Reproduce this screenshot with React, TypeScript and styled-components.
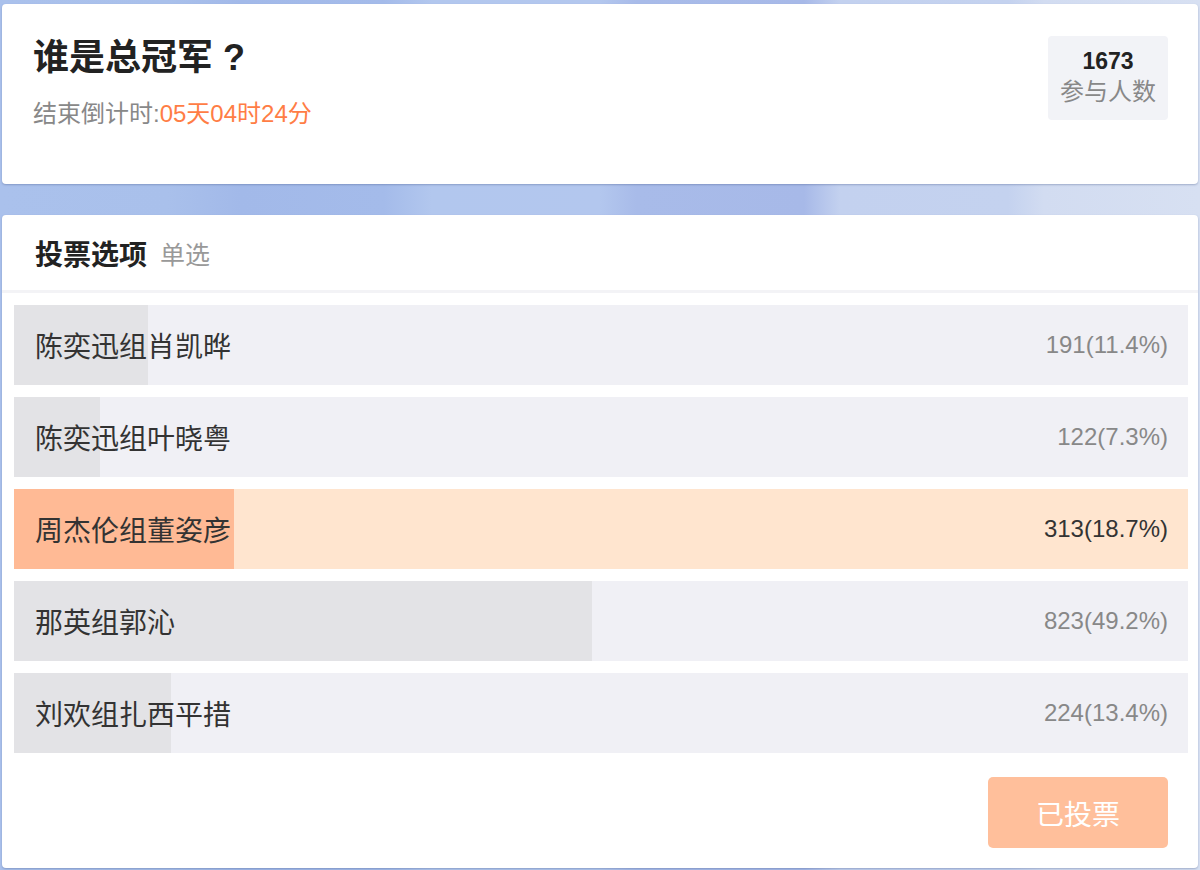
import React from "react";
import styled, { createGlobalStyle } from "styled-components";

const GlobalStyle = createGlobalStyle`
  html, body {
    margin: 0;
    padding: 0;
  }
  body {
    font-family: "Liberation Sans", "Noto Sans CJK SC", sans-serif;
    background: linear-gradient(
      90deg,
      #aac1ec 0%,
      #a9c0eb 14%,
      #a2b9e9 20%,
      #a4bbea 32%,
      #b2c7ee 36%,
      #b3c7ee 50%,
      #a8bbe9 53%,
      #a7b9e8 67%,
      #c3d1ef 70%,
      #c4d2ef 84%,
      #d2dcf1 87%,
      #d7e0f2 100%
    );
  }
`;

const Page = styled.div`
  width: 1200px;
  height: 870px;
  box-sizing: border-box;
  padding: 4px 2px 2px;
  display: flex;
  flex-direction: column;
  gap: 31px;
`;

const Card = styled.div`
  background: #fff;
  border-radius: 4px;
  box-shadow: 0 1px 2px rgba(60, 80, 130, 0.35);
  box-sizing: border-box;
`;

const InfoCard = styled(Card)`
  height: 180px;
  padding: 32px 30px 0 31px;
  display: flex;
  justify-content: space-between;
  align-items: flex-start;
`;

const TitleBlock = styled.div`
  display: flex;
  flex-direction: column;
`;

const Title = styled.h1`
  margin: 0;
  font-size: 36px;
  line-height: 44px;
  font-weight: 700;
  color: #222;
`;

const Mark = styled.span`
  margin-left: 10px;
`;

const Countdown = styled.div`
  margin-top: 19px;
  font-size: 24px;
  line-height: 30px;
  color: #888;
`;

const Remain = styled.span`
  color: #ff7d45;
`;

const Stats = styled.div`
  width: 120px;
  height: 84px;
  box-sizing: border-box;
  padding-top: 12px;
  border-radius: 4px;
  background: #f2f3f7;
  display: flex;
  flex-direction: column;
  align-items: center;
`;

const StatNum = styled.div`
  font-size: 23px;
  line-height: 26px;
  font-weight: 700;
  color: #222;
`;

const StatLabel = styled.div`
  font-size: 24px;
  line-height: 36px;
  color: #888;
`;

const VoteCard = styled(Card)`
  flex: 1;
  display: flex;
  flex-direction: column;
`;

const VoteHeader = styled.div`
  height: 75px;
  padding-left: 33px;
  display: flex;
  align-items: center;
  border-bottom: 3px solid #f3f3f6;
`;

const HeaderTitle = styled.span`
  font-size: 28px;
  font-weight: 700;
  color: #222;
`;

const HeaderTag = styled.span`
  margin-left: 13px;
  font-size: 25px;
  color: #999;
`;

const Options = styled.div`
  padding: 12px 10px 0 12px;
  display: flex;
  flex-direction: column;
  gap: 12px;
`;

const Option = styled.div<{ $picked?: boolean }>`
  position: relative;
  height: 80px;
  padding: 0 20px 0 21px;
  display: flex;
  align-items: center;
  justify-content: space-between;
  background: ${(p) => (p.$picked ? "#ffe5cf" : "#f0f0f5")};
  overflow: hidden;
`;

const Fill = styled.div<{ $picked?: boolean }>`
  position: absolute;
  left: 0;
  top: 0;
  bottom: 0;
  background: ${(p) => (p.$picked ? "#ffba95" : "#e3e3e6")};
`;

const OptionName = styled.span`
  position: relative;
  font-size: 28px;
  color: #333;
`;

const OptionCount = styled.span<{ $picked?: boolean }>`
  position: relative;
  font-size: 24px;
  color: ${(p) => (p.$picked ? "#333" : "#888")};
`;

const Footer = styled.div`
  padding: 24px 30px 0 0;
  display: flex;
  justify-content: flex-end;
`;

const VotedButton = styled.button`
  width: 180px;
  height: 71px;
  border: none;
  border-radius: 5px;
  background: #ffbf9b;
  color: #fff;
  font-family: inherit;
  font-size: 28px;
  cursor: default;
`;

const options = [
  { name: "陈奕迅组肖凯晔", votes: 191, pct: 11.4 },
  { name: "陈奕迅组叶晓粤", votes: 122, pct: 7.3 },
  { name: "周杰伦组董姿彦", votes: 313, pct: 18.7, picked: true },
  { name: "那英组郭沁", votes: 823, pct: 49.2 },
  { name: "刘欢组扎西平措", votes: 224, pct: 13.4 },
];

export default function App() {
  return (
    <>
      <GlobalStyle />
      <Page>
        <InfoCard>
          <TitleBlock>
            <Title>
              谁是总冠军<Mark>?</Mark>
            </Title>
            <Countdown>
              结束倒计时:<Remain>05天04时24分</Remain>
            </Countdown>
          </TitleBlock>
          <Stats>
            <StatNum>1673</StatNum>
            <StatLabel>参与人数</StatLabel>
          </Stats>
        </InfoCard>
        <VoteCard>
          <VoteHeader>
            <HeaderTitle>投票选项</HeaderTitle>
            <HeaderTag>单选</HeaderTag>
          </VoteHeader>
          <Options>
            {options.map((o) => (
              <Option key={o.name} $picked={o.picked}>
                <Fill $picked={o.picked} style={{ width: `${o.pct}%` }} />
                <OptionName>{o.name}</OptionName>
                <OptionCount $picked={o.picked}>
                  {o.votes}({o.pct}%)
                </OptionCount>
              </Option>
            ))}
          </Options>
          <Footer>
            <VotedButton>已投票</VotedButton>
          </Footer>
        </VoteCard>
      </Page>
    </>
  );
}
